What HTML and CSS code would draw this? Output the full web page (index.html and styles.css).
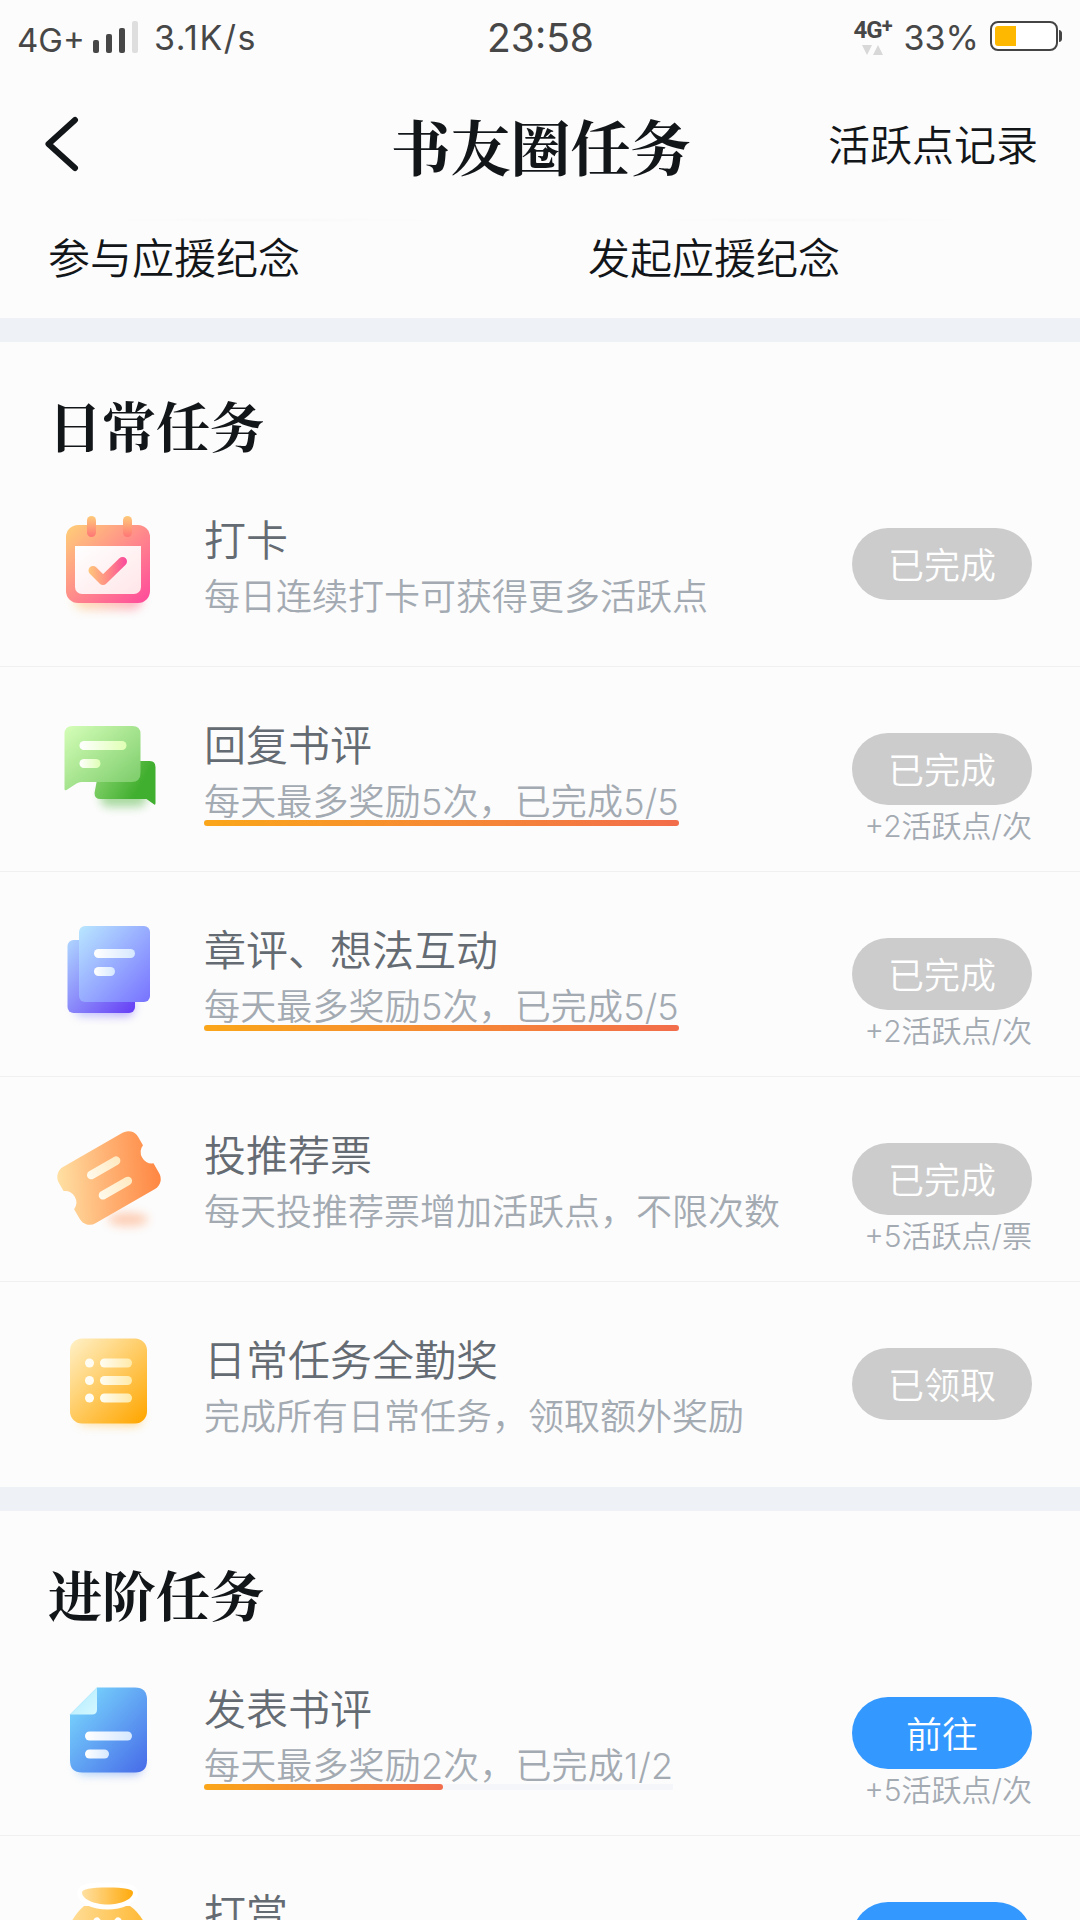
FILE: index.html
```html
<!DOCTYPE html>
<html lang="zh-CN">
<head>
<meta charset="utf-8">
<title>书友圈任务</title>
<link rel="stylesheet" href="styles.css">
</head>
<body>
<div class="screen">
  <div class="status">
    <div class="status-side">
      <span class="net">4G+</span>
      <svg class="signal" width="46" height="33" viewBox="0 0 46 33"><g fill="#474747"><rect x="0" y="19" width="6" height="13" rx="2"/><rect x="13" y="13" width="6" height="19" rx="2"/><rect x="26" y="7" width="6" height="25" rx="2"/></g><rect x="39" y="0" width="6" height="32" rx="2" fill="#dedede"/></svg>
      <span class="speed">3.1K/s</span>
    </div>
    <span class="clock">23:58</span>
    <div class="status-side">
      <div class="data"><span class="data-label">4G<sup>+</sup></span><svg width="21" height="10" viewBox="0 0 21 10" fill="#d8d8d8"><path d="M0 0h10l-5 10zM11 10h10L16 0z"/></svg></div>
      <span class="percent">33%</span>
      <svg class="battery" width="74" height="32" viewBox="0 0 74 32"><rect x="1" y="1" width="66" height="28" rx="7" fill="#fff" stroke="#444" stroke-width="2"/><path d="M8 5h18v20H8a3 3 0 0 1-3-3V8a3 3 0 0 1 3-3z" fill="#ffb800"/><path d="M69 9c2 0 3 2 3 3v6c0 1-1 3-3 3z" fill="#444"/></svg>
    </div>
  </div>

  <header class="nav">
    <svg class="back" width="36" height="56" viewBox="0 0 36 56"><path d="M30 4 3.500 28 30 52" fill="none" stroke="#121619" stroke-width="6" stroke-linecap="round" stroke-linejoin="round"/></svg>
    <h1>书友圈任务</h1>
    <a class="record">活跃点记录</a>
  </header>

  <div class="memorials"><span>参与应援纪念</span><span>发起应援纪念</span></div>

  <section class="tasks">
    <h2>日常任务</h2>

    <div class="row">
      <svg class="icon" viewBox="0 0 120 120">
        <defs>
          <filter id="soft" x="-30%" y="-100%" width="160%" height="300%"><feGaussianBlur stdDeviation="5"/></filter>
          <linearGradient id="cal" x1="0" y1="0" x2="1" y2="1"><stop offset="0" stop-color="#ffd077"/><stop offset=".5" stop-color="#ff8b8b"/><stop offset="1" stop-color="#ff489c"/></linearGradient>
          <linearGradient id="shade"><stop offset="0" stop-color="#ffd077"/><stop offset="1" stop-color="#ff6a8c"/></linearGradient>
          <linearGradient id="ring" x1="0" y1="0" x2="0" y2="1"><stop offset="0" stop-color="#fecb7a"/><stop offset="1" stop-color="#ff7676"/></linearGradient>
          <linearGradient id="page" x1="0" y1="0" x2="1" y2="1"><stop offset="0" stop-color="#fff"/><stop offset="1" stop-color="#ffe5e8"/></linearGradient>
          <linearGradient id="tick" gradientUnits="userSpaceOnUse" x1="41" y1="0" x2="79" y2="0"><stop offset="0" stop-color="#ffc57b"/><stop offset=".5" stop-color="#ff8b85"/><stop offset="1" stop-color="#f9489c"/></linearGradient>
        </defs>
        <rect x="26" y="78" width="68" height="24" rx="10" fill="url(#shade)" opacity=".5" filter="url(#soft)"/>
        <rect x="18" y="17" width="84" height="78" rx="12" fill="url(#cal)"/>
        <path d="M27 38h66v41a7 7 0 0 1-7 7H34a7 7 0 0 1-7-7z" fill="url(#page)"/>
        <rect x="39" y="8" width="9" height="21" rx="4.500" fill="url(#ring)"/><rect x="75" y="8" width="9" height="21" rx="4.500" fill="url(#ring)"/>
        <path d="M45 62.500 55 72.500 74.500 53.500" fill="none" stroke="url(#tick)" stroke-width="9" stroke-linecap="round" stroke-linejoin="round"/>
      </svg>
      <div class="text"><h3>打卡</h3><p>每日连续打卡可获得更多活跃点</p></div>
      <div class="action"><button class="done">已完成</button></div>
    </div>

    <div class="row">
      <svg class="icon" viewBox="5.5 -2 120 120">
        <defs>
          <linearGradient id="g1" x1="0" y1="0" x2="1" y2="1"><stop offset="0" stop-color="#d5feb8"/><stop offset="1" stop-color="#76c965"/></linearGradient>
          <linearGradient id="g2" x1="0" y1=".3" x2="1" y2=".7"><stop offset="0" stop-color="#86d36d"/><stop offset=".75" stop-color="#40ae2e"/></linearGradient>
          <linearGradient id="g3"><stop offset="0" stop-color="#fff"/><stop offset="1" stop-color="#dfffb4"/></linearGradient>
        </defs>
        <rect x="58" y="72" width="46" height="20" rx="8" fill="#46b034" opacity=".45" filter="url(#soft)"/>
        <path d="M58 46h49q6 0 6 6v36q0 3-2 1l-7-5H58q-6 0-6-6z" fill="url(#g2)"/>
        <path d="M30 11h60q8 0 8 8v39q0 9-9 9H39q-3 0-5 1.500L24 75q-2 1-2-1V19q0-8 8-8z" fill="url(#g1)"/>
        <rect x="37" y="26" width="47" height="9" rx="4.500" fill="url(#g3)"/><rect x="37" y="44" width="21" height="9" rx="4.500" fill="url(#g3)"/>
      </svg>
      <div class="text"><h3>回复书评</h3><p><span class="meter">每天最多奖励5次，已完成5/5<i class="bar" style="width:100%"></i></span></p></div>
      <div class="action"><button class="done">已完成</button><small>+2活跃点/次</small></div>
    </div>

    <div class="row">
      <svg class="icon" viewBox="0 -2 120 120">
        <defs>
          <linearGradient id="v1" x1="0" y1="0" x2="1" y2="1"><stop offset="0" stop-color="#b9e7ff"/><stop offset="1" stop-color="#7772ff"/></linearGradient>
          <linearGradient id="v2" x1="0" y1="0" x2="1" y2="1"><stop offset="0" stop-color="#aed5ff"/><stop offset="1" stop-color="#653cf5"/></linearGradient>
          <linearGradient id="v3"><stop offset="0" stop-color="#fff"/><stop offset="1" stop-color="#d6e8ff"/></linearGradient>
        </defs>
        <rect x="26" y="76" width="60" height="20" rx="8" fill="url(#v2)" opacity=".5" filter="url(#soft)"/>
        <rect x="19.500" y="20" width="67.500" height="73" rx="6" fill="url(#v2)"/>
        <rect x="31" y="6" width="71" height="76" rx="6" fill="url(#v1)"/>
        <rect x="46" y="29" width="41" height="9" rx="4.500" fill="url(#v3)"/><rect x="46" y="47" width="21" height="9" rx="4.500" fill="url(#v3)"/>
      </svg>
      <div class="text"><h3>章评、想法互动</h3><p><span class="meter">每天最多奖励5次，已完成5/5<i class="bar" style="width:100%"></i></span></p></div>
      <div class="action"><button class="done">已完成</button><small>+2活跃点/次</small></div>
    </div>

    <div class="row">
      <svg class="icon" viewBox="0 -1.5 120 120">
        <defs>
          <linearGradient id="t1" gradientUnits="userSpaceOnUse" x1="12" y1="30" x2="108" y2="78"><stop offset="0" stop-color="#ffe0a3"/><stop offset=".5" stop-color="#ffb173"/><stop offset="1" stop-color="#ff8743"/></linearGradient>
          <linearGradient id="t2"><stop offset="0" stop-color="#fffaec"/><stop offset="1" stop-color="#ffe9c0"/></linearGradient>
        </defs>
        <ellipse cx="80" cy="95" rx="20" ry="7" fill="#ff8c50" opacity=".4" filter="url(#soft)"/>
        <g transform="translate(61 53.500) rotate(-30) scale(.955) translate(-61 -53.500)"><path d="M25 19.500H97a12 12 0 0 1 12 12V41.500a12 12 0 0 0 0 22V75.500a12 12 0 0 1-12 12H25a12 12 0 0 1-12-12V63.500a12 12 0 0 0 0-22V31.500a12 12 0 0 1 12-12z" fill="url(#t1)"/><rect x="42" y="37" width="39" height="9" rx="4.500" fill="url(#t2)"/><rect x="42" y="61.500" width="39" height="9" rx="4.500" fill="url(#t2)"/></g>
      </svg>
      <div class="text"><h3>投推荐票</h3><p>每天投推荐票增加活跃点，不限次数</p></div>
      <div class="action"><button class="done">已完成</button><small>+5活跃点/票</small></div>
    </div>

    <div class="row last">
      <svg class="icon" viewBox="0 -1.5 120 120">
        <defs>
          <linearGradient id="y1" x1="0" y1="0" x2=".9" y2="1"><stop offset="0" stop-color="#fff1c8"/><stop offset="1" stop-color="#ffa805"/></linearGradient>
          <linearGradient id="y2"><stop offset="0" stop-color="#fffdf3"/><stop offset="1" stop-color="#ffeaa8"/></linearGradient>
        </defs>
        <rect x="30" y="76" width="64" height="20" rx="8" fill="url(#y1)" opacity=".5" filter="url(#soft)"/>
        <rect x="22" y="9" width="77" height="85" rx="12" fill="url(#y1)"/>
        <g fill="#fffdf3"><circle cx="41.500" cy="33.500" r="4.500"/><circle cx="41.500" cy="51" r="4.500"/><circle cx="41.500" cy="68.500" r="4.500"/></g>
        <g fill="url(#y2)"><rect x="52" y="29" width="32" height="9" rx="4.500"/><rect x="52" y="46.500" width="32" height="9" rx="4.500"/><rect x="52" y="64" width="32" height="9" rx="4.500"/></g>
      </svg>
      <div class="text"><h3>日常任务全勤奖</h3><p>完成所有日常任务，领取额外奖励</p></div>
      <div class="action"><button class="done">已领取</button></div>
    </div>
  </section>

  <section class="tasks">
    <h2>进阶任务</h2>

    <div class="row">
      <svg class="icon" viewBox="0 -1.5 120 120">
        <defs>
          <linearGradient id="b1" x1="0" y1="0" x2="1" y2="1"><stop offset="0" stop-color="#7de0ff"/><stop offset="1" stop-color="#466ae8"/></linearGradient>
          <linearGradient id="b2" x1="0" y1="0" x2="1" y2="1"><stop offset="0" stop-color="#aeeaff"/><stop offset="1" stop-color="#d5f8ff"/></linearGradient>
        </defs>
        <rect x="28" y="76" width="66" height="20" rx="8" fill="url(#b1)" opacity=".5" filter="url(#soft)"/>
        <path d="M49 9h38q12 0 12 12v61q0 12-12 12H34q-12 0-12-12V36z" fill="url(#b1)"/>
        <path d="M49 9v22q0 5-5 5H22z" fill="url(#b2)"/>
        <rect x="37" y="53" width="47" height="9" rx="4.500" fill="url(#v3)"/><rect x="37" y="71" width="24" height="9" rx="4.500" fill="url(#v3)"/>
      </svg>
      <div class="text"><h3>发表书评</h3><p><span class="meter">每天最多奖励2次，已完成1/2<i class="bar" style="width:51%"></i></span></p></div>
      <div class="action"><button>前往</button><small>+5活跃点/次</small></div>
    </div>

    <div class="row last">
      <svg class="icon" viewBox="0 0 120 120">
        <defs>
          <linearGradient id="m1" x1="0" y1="0" x2="1" y2="0"><stop offset="0" stop-color="#ffe0a0"/><stop offset="1" stop-color="#ffb62c"/></linearGradient>
          <linearGradient id="m2"><stop offset="0" stop-color="#ffe0a3"/><stop offset="1" stop-color="#ffaa0c"/></linearGradient>
        </defs>
        <path d="M36 24h46q12 8 22 32v44H16V56q8-22 20-32z" fill="url(#m1)"/>
        <path d="M59.500 5.500c17 0 25.500 1.500 25.500 5 0 6.500-12 12-25.500 12S34 17 34 10.500c0-3.500 8.500-5 25.500-5z" fill="url(#m2)" stroke="#fff" stroke-width="10" paint-order="stroke"/>
        <path d="M49 39l10.500 12L70 39" fill="none" stroke="#fff" stroke-width="7" stroke-linecap="round"/>
      </svg>
      <div class="text"><h3>打赏</h3></div>
      <div class="action"><button></button></div>
    </div>
  </section>
</div>
</body>
</html>
```
FILE: styles.css
```css
* { box-sizing: border-box; }
body { margin: 0; background: #fcfcfc; }
.screen {
  width: 1080px; height: 1920px; overflow: hidden;
  font-family: Inter, "Noto Sans CJK SC", sans-serif;
  font-weight: 350; color: #121619;
}
h1, h2, h3, p { margin: 0; white-space: nowrap; }

.status {
  height: 74px; padding: 0 16px 0 17px;
  display: grid; grid-template-columns: 1fr auto 1fr; align-items: center;
  color: #474747; font-weight: 400;
}
.status-side { display: flex; align-items: center; height: 74px; }
.status-side:last-child { justify-content: flex-end; }
.net { font-size: 33px; width: 76px; padding-top: 6px; white-space: nowrap; }
.speed { font-size: 34px; margin-left: 15px; letter-spacing: 1.5px; }
.clock { font-size: 39px; }
.data { display: flex; flex-direction: column; align-items: center; gap: 5px; width: 40px; margin-right: 11px; }
.data-label { font: 700 24px/20px Roboto, sans-serif; letter-spacing: -1px; white-space: nowrap; }
.data-label sup { font-size: 20px; line-height: 0; vertical-align: 5px; }
.percent { font-size: 34px; margin-right: 11px; }

.nav {
  height: 144px; padding: 0 42px 0 45px;
  display: grid; grid-template-columns: 1fr auto 1fr; align-items: center;
}
.nav .back { margin-bottom: 4px; }
.nav h1 { font: 700 60px/80px "Noto Serif CJK SC", "Noto Sans CJK SC", serif; margin: 0 2px 3px 0; }
.record { font-size: 42px; line-height: 60px; text-align: right; }

.memorials {
  height: 100px; display: grid; grid-template-columns: 540px 540px;
  font-size: 42px; line-height: 82px;
}
.memorials span { padding-left: 48px; background: radial-gradient(closest-side, #f8f8f8, #fcfcfc) 100px 0 / 340px 4px no-repeat; }

.tasks { border-top: 24px solid #eef1f5; }
.tasks h2 {
  height: 120px; padding: 43px 0 0 48px;
  font: 700 54px/80px "Noto Serif CJK SC", "Noto Sans CJK SC", serif;
}
.row {
  height: 205px; padding: 0 48px; border-bottom: 1px solid #f0f0f0;
  display: flex; align-items: flex-start;
}
.row.last { border-bottom-color: transparent; }
.icon { flex: none; width: 120px; height: 120px; margin-top: 46px; }
.text { flex: 1; margin-left: 36px; padding-top: 49px; }
.text h3 { font-size: 42px; line-height: 60px; font-weight: 350; color: #656b72; }
.text p { font-size: 36px; line-height: 52px; color: #a3aab2; }
.meter {
  display: inline-block; position: relative; letter-spacing: .15px;
  background: linear-gradient(#f5f6fa, #f5f6fa) 0 44px / 100% 6px no-repeat;
}
.bar {
  position: absolute; left: 0; top: 44px; height: 6px; border-radius: 3px;
  background: linear-gradient(90deg, #faa61a, #f26d4b);
}
.action { display: flex; flex-direction: column; align-items: flex-end; padding-top: 66px; }
.action button {
  width: 180px; height: 72px; padding: 5px 0 0; border: 0; border-radius: 36px;
  background: #3398ff; color: #fff; font: inherit; font-size: 36px; line-height: 67px;
}
.action .done { background: #ccc; }
.action small { font-size: 30px; line-height: 43px; color: #a3aab2; }
```
